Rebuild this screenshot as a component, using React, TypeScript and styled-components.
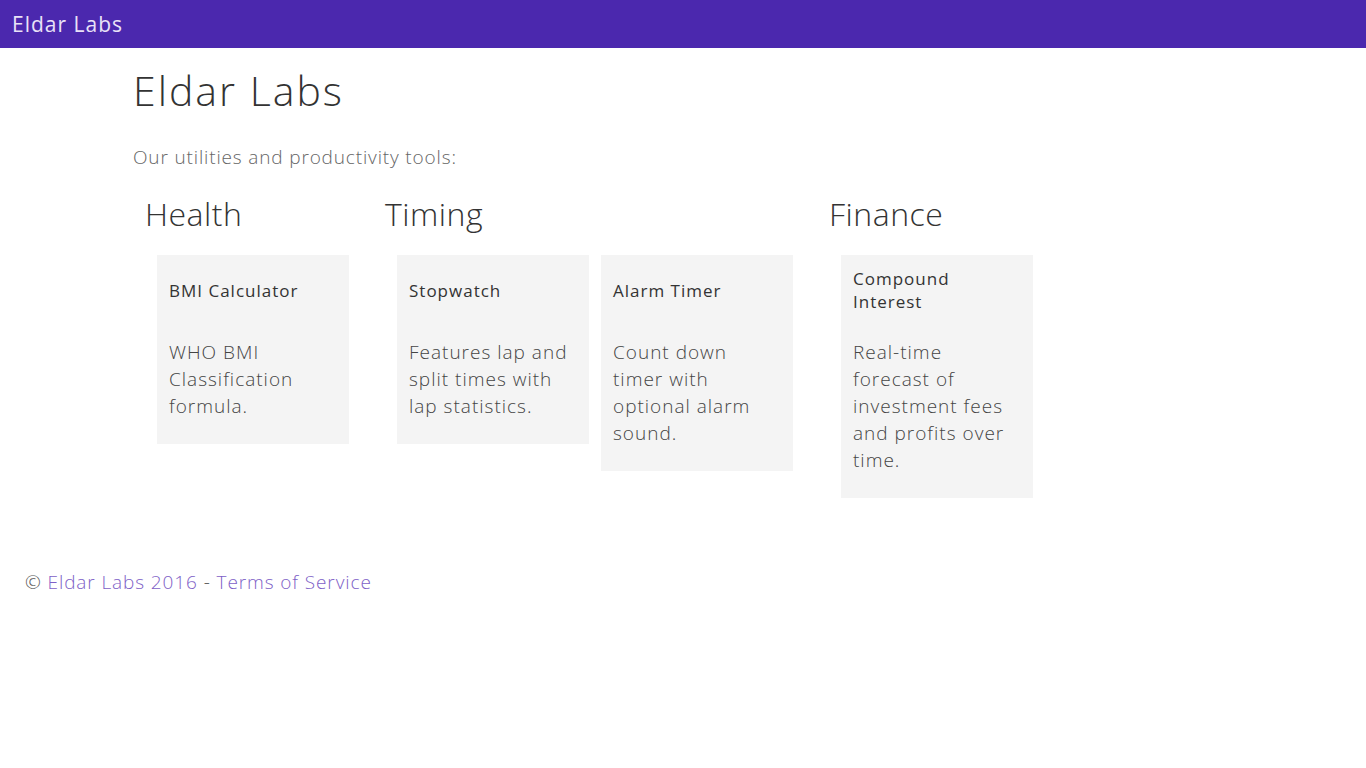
import React from 'react';
import styled, { createGlobalStyle } from 'styled-components';

type Tool = {
  title: string;
  description: string;
};

type Group = {
  name: string;
  tools: Tool[];
};

const groups: Group[] = [
  {
    name: 'Health',
    tools: [{ title: 'BMI Calculator', description: 'WHO BMI Classification formula.' }],
  },
  {
    name: 'Timing',
    tools: [
      { title: 'Stopwatch', description: 'Features lap and split times with lap statistics.' },
      { title: 'Alarm Timer', description: 'Count down timer with optional alarm sound.' },
    ],
  },
  {
    name: 'Finance',
    tools: [
      {
        title: 'Compound Interest',
        description: 'Real-time forecast of investment fees and profits over time.',
      },
    ],
  },
];

const GlobalStyle = createGlobalStyle`
  body {
    margin: 0;
    background: #fff;
    font-family: "Open Sans", "Liberation Sans", sans-serif;
    color: #333;
  }
`;

const TopBar = styled.header`
  height: 48px;
  background: #4b28ae;
  display: flex;
  align-items: center;
  padding: 0 12px;
`;

const BarTitle = styled.div`
  color: #e9e2f7;
  font-size: 21px;
  font-weight: 500;
  letter-spacing: 1px;
`;

const Main = styled.main`
  padding: 0 133px;
`;

const PageTitle = styled.h1`
  margin: 16px 0 0;
  font-size: 41px;
  line-height: 52px;
  font-weight: 300;
  letter-spacing: 2px;
  color: #333;
`;

const Intro = styled.p`
  margin: 28px 0 0;
  font-size: 19px;
  line-height: 26px;
  font-weight: 300;
  letter-spacing: 0.85px;
  color: #666;
`;

const Groups = styled.div`
  display: flex;
  align-items: flex-start;
  margin-top: 24px;
`;

const Section = styled.section`
  padding: 0 12px;
`;

const SectionTitle = styled.h2`
  margin: 0;
  font-size: 32px;
  line-height: 40px;
  font-weight: 300;
  letter-spacing: 0.5px;
  color: #333;
`;

const Cards = styled.div`
  display: flex;
  align-items: flex-start;
  gap: 12px;
  padding: 0 12px;
  margin-top: 21px;
`;

const Card = styled.div`
  width: 192px;
  box-sizing: border-box;
  background: #f4f4f4;
  padding: 12px 12px 24px;
`;

const CardTitle = styled.div`
  min-height: 46px;
  display: flex;
  align-items: center;
  font-size: 17px;
  line-height: 23px;
  font-weight: 400;
  letter-spacing: 1px;
  color: #333;
`;

const CardText = styled.div`
  margin-top: 26px;
  font-size: 19px;
  line-height: 27px;
  font-weight: 300;
  letter-spacing: 1px;
  color: #444;
`;

const Footer = styled.footer`
  padding: 71px 25px 0;
  font-size: 19px;
  font-weight: 300;
  letter-spacing: 0.9px;
  color: #555;
`;

const FooterLink = styled.a`
  color: #7e5fc7;
  text-decoration: none;
`;

export default function App() {
  return (
    <>
      <GlobalStyle />
      <TopBar>
        <BarTitle>Eldar Labs</BarTitle>
      </TopBar>
      <Main>
        <PageTitle>Eldar Labs</PageTitle>
        <Intro>Our utilities and productivity tools:</Intro>
        <Groups>
          {groups.map((group) => (
            <Section key={group.name}>
              <SectionTitle>{group.name}</SectionTitle>
              <Cards>
                {group.tools.map((tool) => (
                  <Card key={tool.title}>
                    <CardTitle>{tool.title}</CardTitle>
                    <CardText>{tool.description}</CardText>
                  </Card>
                ))}
              </Cards>
            </Section>
          ))}
        </Groups>
      </Main>
      <Footer>
        © <FooterLink href="#">Eldar Labs 2016</FooterLink> - <FooterLink href="#">Terms of Service</FooterLink>
      </Footer>
    </>
  );
}
